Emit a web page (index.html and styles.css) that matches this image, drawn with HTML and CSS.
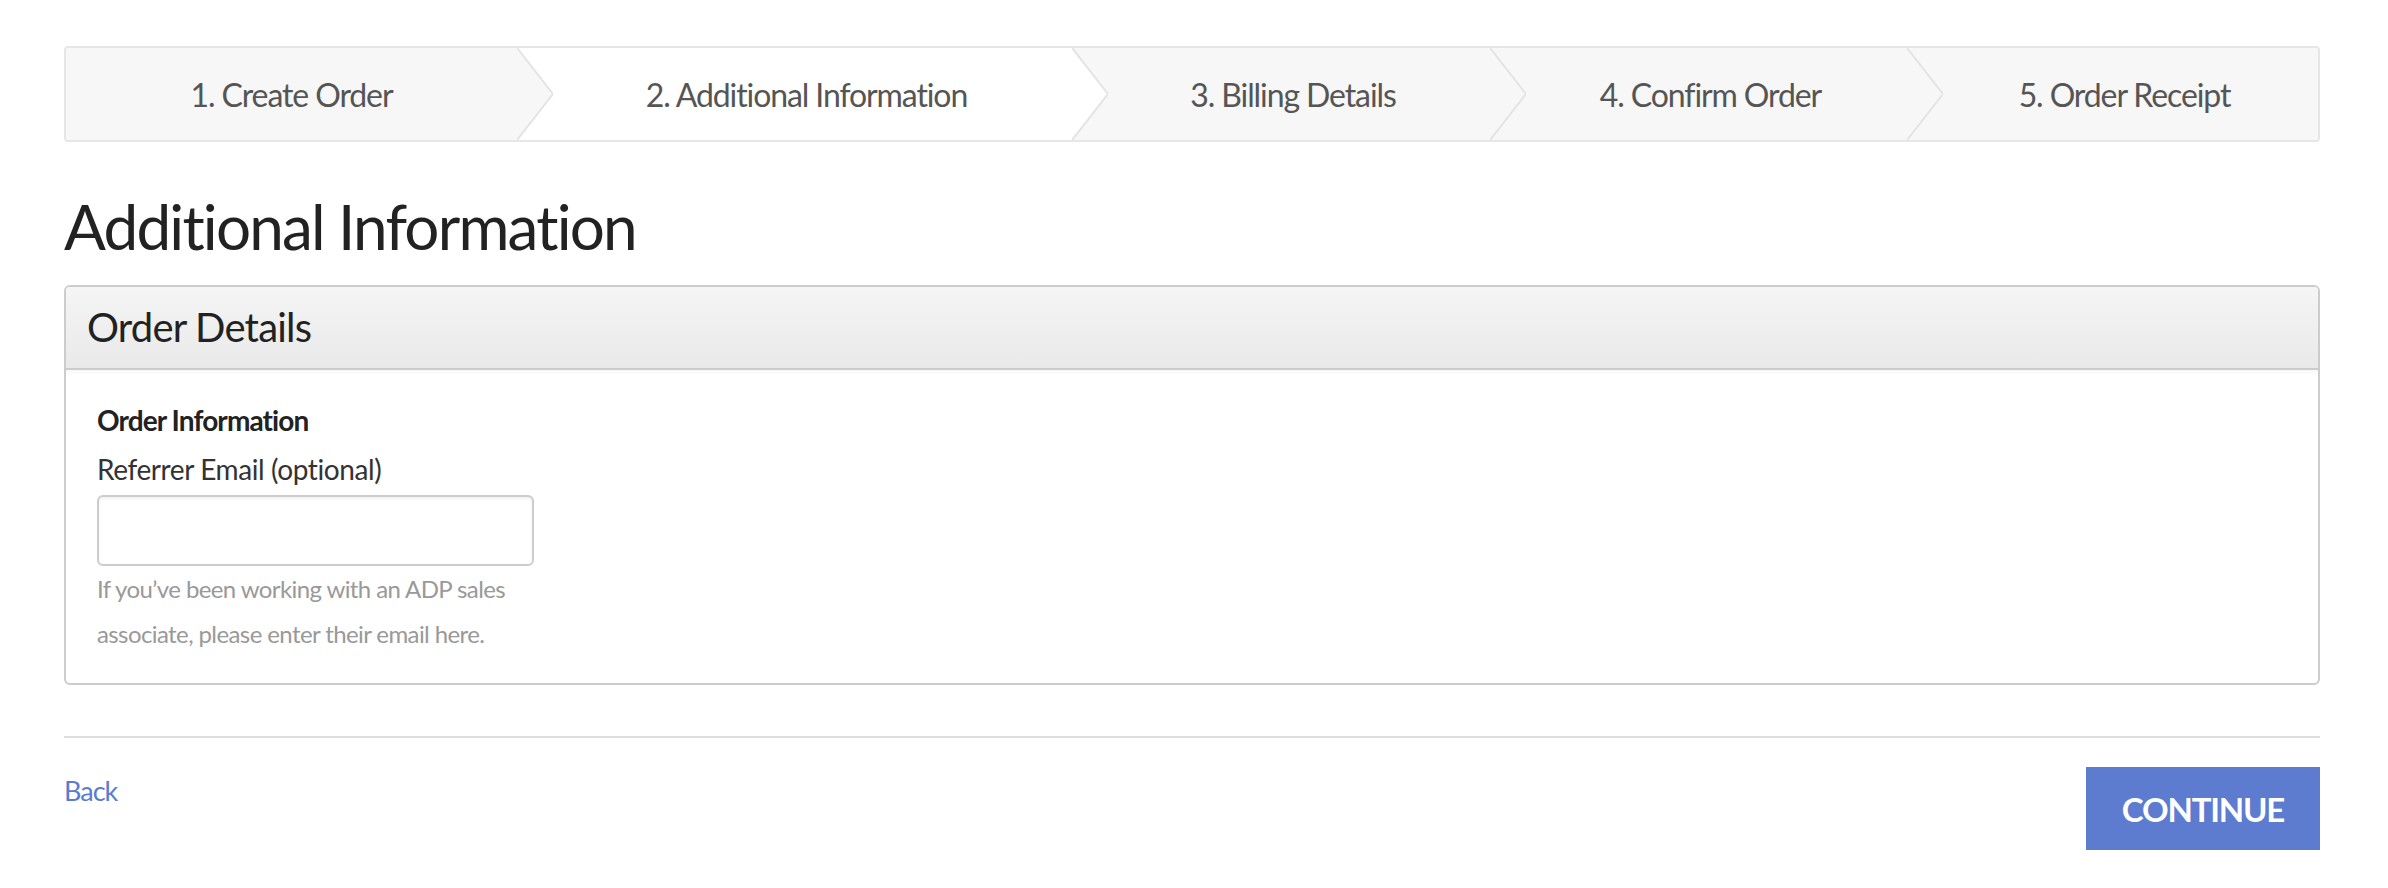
FILE: index.html
```html
<!DOCTYPE html>
<html lang="en">
<head>
<meta charset="utf-8">
<title>Additional Information</title>
<link rel="stylesheet" href="styles.css">
</head>
<body>
<div class="page">
  <nav class="steps">
    <div class="step">1. Create Order<svg class="chev" viewBox="0 0 36 92" preserveAspectRatio="none"><polygon points="0,0 36,46 0,92" fill="#f7f7f7"/><polyline points="0,0 36,46 0,92" fill="none" stroke="#e3e3e3" stroke-width="2" vector-effect="non-scaling-stroke"/></svg></div>
    <div class="step active">2. Additional Information<svg class="chev" viewBox="0 0 36 92" preserveAspectRatio="none"><polygon points="0,0 36,46 0,92" fill="#ffffff"/><polyline points="0,0 36,46 0,92" fill="none" stroke="#e3e3e3" stroke-width="2" vector-effect="non-scaling-stroke"/></svg></div>
    <div class="step">3. Billing Details<svg class="chev" viewBox="0 0 36 92" preserveAspectRatio="none"><polygon points="0,0 36,46 0,92" fill="#f7f7f7"/><polyline points="0,0 36,46 0,92" fill="none" stroke="#e3e3e3" stroke-width="2" vector-effect="non-scaling-stroke"/></svg></div>
    <div class="step">4. Confirm Order<svg class="chev" viewBox="0 0 36 92" preserveAspectRatio="none"><polygon points="0,0 36,46 0,92" fill="#f7f7f7"/><polyline points="0,0 36,46 0,92" fill="none" stroke="#e3e3e3" stroke-width="2" vector-effect="non-scaling-stroke"/></svg></div>
    <div class="step">5. Order Receipt</div>
  </nav>

  <h1 class="title">Additional Information</h1>

  <section class="card">
    <header class="card-head">Order Details</header>
    <div class="card-body">
      <h3 class="group-title">Order Information</h3>
      <label class="field-label" for="ref">Referrer Email (optional)</label>
      <input class="field-input" id="ref" type="email">
      <p class="help">If you’ve been working with an ADP sales associate, please enter their email here.</p>
    </div>
  </section>

  <hr class="divider">

  <div class="actions">
    <a class="back" href="#">Back</a>
    <button class="continue" type="button">CONTINUE</button>
  </div>
</div>
</body>
</html>
```

FILE: styles.css
```css
html, body {
  margin: 0;
  padding: 0;
  background: #ffffff;
}

body {
  font-family: Lato, "Open Sans", "Liberation Sans", sans-serif;
  color: #333333;
}

.page {
  width: 2256px;
  padding: 46px 0 0 64px;
}

/* ---------- steps ---------- */
.steps {
  display: grid;
  grid-template-columns: 451px 555px 418px 417px 1fr;
  height: 92px;
  border: 2px solid #e6e6e6;
  border-radius: 4px;
  overflow: hidden;
  background: #f7f7f7;
}

.step {
  position: relative;
  display: flex;
  align-items: center;
  justify-content: center;
  padding-left: 24px;
  font-size: 32px;
  letter-spacing: -1.1px;
  color: #555555;
  background: #f7f7f7;
  white-space: nowrap;
}

.step:first-child {
  padding-left: 0;
}

.step.active {
  background: #ffffff;
}

.chev {
  position: absolute;
  top: 0;
  left: 100%;
  width: 36px;
  height: 100%;
  z-index: 1;
}

/* ---------- heading ---------- */
.title {
  margin: 46px 0 20px;
  font-size: 62px;
  line-height: 77px;
  font-weight: 400;
  letter-spacing: -1.8px;
  color: #222222;
}

/* ---------- card ---------- */
.card {
  border: 2px solid #cccccc;
  border-radius: 6px;
  overflow: hidden;
}

.card-head {
  padding: 15px 21px 16px;
  font-size: 40px;
  line-height: 50px;
  letter-spacing: -0.8px;
  color: #222222;
  background: linear-gradient(#f5f5f5, #e9e9e9);
  border-bottom: 2px solid #cccccc;
  box-shadow: 0 2px 4px rgba(0, 0, 0, 0.04);
}

.card-body {
  padding: 30px 31px 27px;
}

.group-title {
  margin: 0;
  font-size: 28px;
  line-height: 40px;
  font-weight: 700;
  letter-spacing: -0.9px;
  color: #222222;
}

.field-label {
  display: block;
  margin-top: 9px;
  font-size: 28px;
  line-height: 40px;
  letter-spacing: -0.4px;
  color: #333333;
}

.field-input {
  display: block;
  box-sizing: border-box;
  width: 437px;
  height: 71px;
  margin: 6px 0 0;
  border: 2px solid #cccccc;
  border-radius: 6px;
  box-shadow: inset 0 2px 3px rgba(0, 0, 0, 0.06);
  background: #ffffff;
  font: inherit;
}

.help {
  width: 437px;
  margin: 0;
  font-size: 24px;
  line-height: 45px;
  letter-spacing: -0.6px;
  color: #999999;
}

/* ---------- footer ---------- */
.divider {
  margin: 51px 0 0;
  border: 0;
  height: 2px;
  background: #dddddd;
}

.actions {
  display: flex;
  justify-content: space-between;
  align-items: flex-start;
  padding-top: 29px;
}

.back {
  margin-top: 4px;
  font-size: 27px;
  line-height: 40px;
  letter-spacing: -1px;
  color: #5a7bd0;
  text-decoration: none;
}

.continue {
  width: 234px;
  height: 83px;
  border: 0;
  border-radius: 0;
  background: #5d7bcf;
  color: #ffffff;
  font-family: Lato, "Open Sans", sans-serif;
  font-size: 33px;
  font-weight: 700;
  letter-spacing: -1.2px;
}
```
